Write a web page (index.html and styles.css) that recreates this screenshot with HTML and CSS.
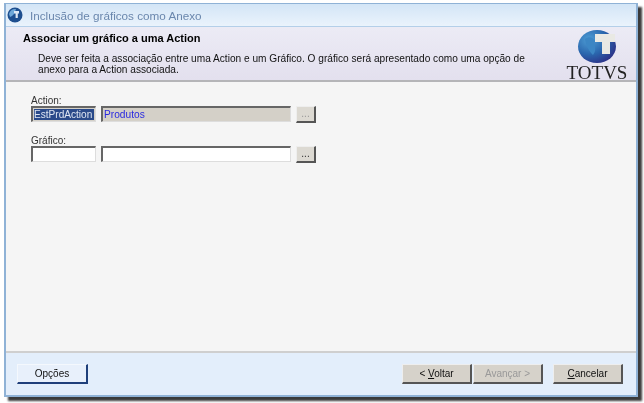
FILE: index.html
```html
<!DOCTYPE html>
<html lang="pt">
<head>
    <meta charset="UTF-8">
    <title>Inclusão de gráficos como Anexo</title>
    <link rel="stylesheet" href="styles.css">
</head>
<body>
    <div class="window">
        <div class="titlebar">
            <svg class="app-icon" width="16" height="16" viewBox="0 0 16 16">
                <circle cx="8" cy="8" r="7.5" fill="#1f4f8f"/>
                <path d="M2 7 C3 3 6 1.5 9 2 C8 6 6 9 3 10 Z" fill="#6fa8d8"/>
                <path d="M7 4 H12 V6.5 H10.8 V11 H8.6 V6.5 H7 Z" fill="#dfe8f3"/>
            </svg>
            <span>Inclusão de gráficos como Anexo</span>
        </div>
        <div class="banner">
            <div class="banner-text">
                <h1>Associar um gráfico a uma Action</h1>
                <p>Deve ser feita a associação entre uma Action e um Gráfico. O gráfico será apresentado como uma opção de<br>anexo para a Action associada.</p>
            </div>
            <div class="logo">
                <svg width="38" height="33" viewBox="0 0 38 33">
                    <defs>
                        <radialGradient id="globe" cx="30%" cy="30%" r="80%">
                            <stop offset="0" stop-color="#4f9fd6"/>
                            <stop offset="0.55" stop-color="#2a66ad"/>
                            <stop offset="1" stop-color="#2c2f86"/>
                        </radialGradient>
                    </defs>
                    <ellipse cx="19" cy="16.5" rx="19" ry="16.5" fill="url(#globe)"/>
                    <path d="M7 9 C11 6 15 7 17 11 C15 15 20 19 15 25 C11 21 8 16 7 9 Z" fill="#3c86c4"/>
                    <path d="M17 4 H37 V12 H32 V24 H24 V12 H17 Z" fill="#e9e9e4"/>
                </svg>
                <div class="logo-name">TOTVS</div>
            </div>
        </div>
        <div class="content">
            <label class="field-label">Action:</label>
            <div class="field-row">
                <div class="input short readonly"><span class="selected">EstPrdAction</span></div>
                <div class="input long readonly"><span class="linked">Produtos</span></div>
                <div class="browse disabled">...</div>
            </div>
            <label class="field-label second">Gráfico:</label>
            <div class="field-row">
                <div class="input short"></div>
                <div class="input long"></div>
                <div class="browse">...</div>
            </div>
        </div>
        <div class="footer">
            <div class="btn btn-options">Opções</div>
            <div class="wizard-buttons">
                <div class="btn">&lt; <u>V</u>oltar</div>
                <div class="btn disabled">Avançar &gt;</div>
                <div class="btn btn-cancel"><u>C</u>ancelar</div>
            </div>
        </div>
    </div>
</body>
</html>
```

FILE: styles.css
```css
html, body {
    margin: 0;
    padding: 0;
    background-color: #fff;
}

body {
    width: 644px;
    height: 403px;
    overflow: hidden;
    font-family: 'Liberation Sans', Arial, sans-serif;
    font-size: 10px;
    color: #333;
}

.window {
    width: 630px;
    height: 391px;
    margin: 3px 0 0 4px;
    display: flex;
    flex-direction: column;
    border: 1px solid #8fb2d6;
    border-width: 1px 2px 2px 2px;
    box-shadow: 4px 4px 2px #3a3a3a;
    filter: blur(0.5px);
}

.titlebar {
    height: 22px;
    display: flex;
    align-items: center;
    gap: 7px;
    padding-left: 1px;
    background: linear-gradient(#d3e5f6, #eaf3fc);
    border-bottom: 1px solid #b4cfe9;
    color: #6a87ad;
    font-size: 11.7px;
}

.app-icon {
    flex: none;
}

.banner {
    height: 53px;
    display: flex;
    justify-content: space-between;
    background: linear-gradient(#ecebf5, #e3e0ee);
    border-bottom: 2px solid #b5b5b8;
}

.banner-text {
    padding: 5px 0 0 17px;
}

h1 {
    margin: 0;
    font-size: 11px;
    line-height: 13px;
    font-weight: bold;
    color: #000;
}

.banner-text p {
    margin: 8px 0 0 15px;
    font-size: 10.15px;
    line-height: 11px;
    color: #111;
}

.logo {
    width: 64px;
    margin-right: 7px;
    padding-top: 3px;
    text-align: center;
}

.logo svg {
    display: block;
    margin: 0 auto;
}

.logo-name {
    margin-top: 1px;
    font-family: 'Liberation Serif', 'Times New Roman', serif;
    font-size: 19px;
    line-height: 17px;
    color: #222;
}

.content {
    flex: 1;
    padding: 13px 0 0 25px;
    background-color: #f5f5f5;
    border-bottom: 2px solid #cfcfcf;
}

.field-label {
    display: block;
    line-height: 11px;
    font-size: 10px;
    color: #333;
}

.field-label.second {
    margin-top: 12px;
}

.field-row {
    display: flex;
    gap: 5px;
    align-items: flex-start;
}

.input {
    height: 11px;
    padding: 1px;
    background-color: #fff;
    border: 1px solid #ddd;
    border-top: 2px solid #666;
    border-left: 2px solid #666;
    line-height: 11px;
    font-size: 10.2px;
}

.short {
    width: 60px;
}

.long {
    width: 185px;
}

.readonly {
    background-color: #d4d0c8;
}

.selected {
    display: block;
    background-color: #2a4a8a;
    color: #dfe6f2;
    font-size: 10.1px;
    white-space: nowrap;
    overflow: hidden;
}

.linked {
    color: #2a2ae0;
}

.browse {
    width: 17px;
    height: 14px;
    background-color: #dcd9d2;
    border: 1px solid #eee;
    border-right: 2px solid #555;
    border-bottom: 2px solid #555;
    text-align: center;
    line-height: 14px;
    color: #333;
}

.browse.disabled {
    color: #999;
}

.footer {
    height: 42px;
    display: flex;
    align-items: flex-start;
    justify-content: space-between;
    padding: 11px 13px 0 11px;
    box-sizing: border-box;
    background-color: #e3eefb;
}

.wizard-buttons {
    display: flex;
}

.btn {
    width: 67px;
    height: 17px;
    margin-right: 1px;
    background-color: #d6d2ca;
    border: 1px solid #eee;
    border-right: 2px solid #555;
    border-bottom: 2px solid #555;
    text-align: center;
    line-height: 17px;
    color: #111;
    font-size: 10px;
}

.btn.disabled {
    color: #999;
}

.btn-cancel {
    margin-left: 9px;
    margin-right: 0;
}

.btn-options {
    width: 68px;
    background-color: #e8f0fb;
    border-color: #f4f8fd;
    border-right-color: #1f3f7a;
    border-bottom-color: #1f3f7a;
}
```
